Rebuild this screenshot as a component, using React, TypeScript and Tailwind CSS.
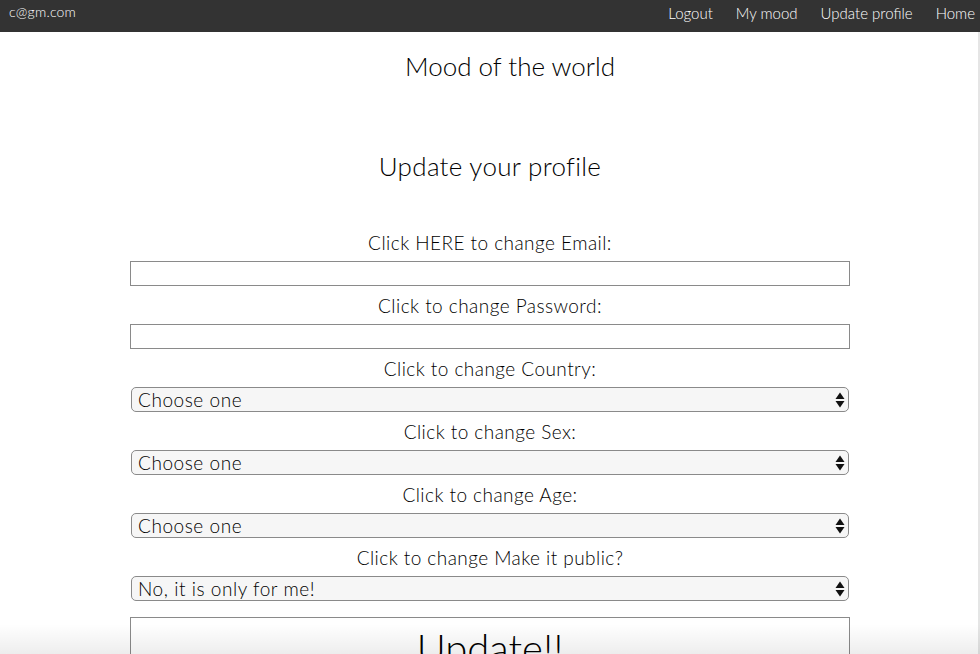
import React from "react";

const font = { fontFamily: "Lato, 'Open Sans', sans-serif" };

function Arrows() {
  return (
    <svg width="10" height="17" viewBox="0 0 10 17" className="absolute right-[3px] top-1/2 -translate-y-1/2">
      <path d="M5 1 L9.5 7.5 L0.5 7.5 Z" fill="#111" />
      <path d="M5 16 L9.5 9.5 L0.5 9.5 Z" fill="#111" />
    </svg>
  );
}

function Select({ text }: { text: string }) {
  return (
    <div className="relative mx-[1px] h-[25px] rounded-[5px] border border-[#8a8a8a] bg-[#f6f6f6] flex items-center pl-[6px] text-[19px] tracking-[0.55px] font-light text-black leading-none">
      <span>{text}</span>
      <Arrows />
    </div>
  );
}

function Label({ children }: { children: React.ReactNode }) {
  return (
    <div className="h-[38px] flex items-center justify-center text-[19px] tracking-[0.45px] font-light text-black leading-none">
      {children}
    </div>
  );
}

export default function App() {
  return (
    <div className="relative w-[980px] h-[654px] overflow-hidden bg-white" style={font}>
      <div className="h-[32px] bg-[#333333] flex items-start justify-between text-white text-[15px] font-light">
        <div className="pl-[9px] pt-[1px] text-[14px] tracking-[0.2px]">c@gm.com</div>
        <div className="flex gap-[23px] pr-[5px] pt-[2px]">
          <span>Logout</span>
          <span>My mood</span>
          <span>Update profile</span>
          <span>Home</span>
        </div>
      </div>
      <div className="absolute right-0 top-[32px] w-[2px] h-[622px] bg-[#e5e5e5]" />
      <div className="pl-[40px] pt-[19px] text-center text-[26px] font-light text-black leading-[30px]">
        Mood of the world
      </div>
      <div className="pt-[70px] text-center text-[26px] tracking-[0.3px] font-light text-black leading-[30px]">
        Update your profile
      </div>
      <div className="mx-auto w-[720px] pt-[42px]">
        <Label>Click HERE to change Email:</Label>
        <div className="h-[25px] border border-[#8a8a8a] bg-white" />
        <Label>Click to change Password:</Label>
        <div className="h-[25px] border border-[#8a8a8a] bg-white" />
        <Label>Click to change Country:</Label>
        <Select text="Choose one" />
        <Label>Click to change Sex:</Label>
        <Select text="Choose one" />
        <Label>Click to change Age:</Label>
        <Select text="Choose one" />
        <Label>Click to change Make it public?</Label>
        <Select text="No, it is only for me!" />
        <div className="mt-[16px] h-[60px] border border-[#8a8a8a] bg-white flex justify-center pt-[6px] text-[40px] font-light text-black leading-[48px]">
          Update!!
        </div>
      </div>
      <div className="absolute left-0 right-0 bottom-0 h-[30px] bg-gradient-to-b from-[rgba(0,0,0,0)] to-[rgba(0,0,0,0.07)] pointer-events-none" />
    </div>
  );
}
